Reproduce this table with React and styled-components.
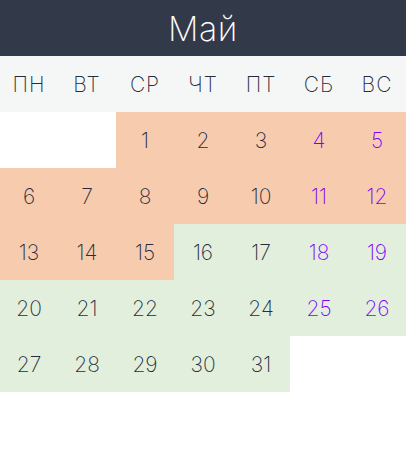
import React from "react";
import styled, { createGlobalStyle } from "styled-components";

const Global = createGlobalStyle`
  html, body { margin: 0; padding: 0; background: #ffffff; }
  body { font-family: Inter, "Noto Sans", sans-serif; }
`;

const Calendar = styled.div`
  width: 406px;
  font-family: Inter, "Noto Sans", sans-serif;
  font-weight: 200;
  color: #262c3a;
`;

const Title = styled.div`
  height: 56px;
  background: #323a4a;
  color: #ffffff;
  display: flex;
  align-items: center;
  justify-content: center;
  font-size: 34px;
  font-weight: 200;
  letter-spacing: 0.5px;
`;

const Grid = styled.div`
  display: grid;
  grid-template-columns: repeat(7, 1fr);
  grid-auto-rows: 56px;
`;

const WeekRow = styled(Grid)`
  background: #f5f7f7;
`;

const WeekDay = styled.div`
  display: flex;
  align-items: center;
  justify-content: center;
  font-size: 21px;
  font-weight: 250;
  letter-spacing: 1px;
`;

const Day = styled.div`
  display: flex;
  align-items: center;
  justify-content: center;
  font-size: 21px;
  font-weight: 250;
  background: ${(p) => (p.$tone === "peach" ? "#f7cbae" : p.$tone === "green" ? "#e2efdc" : "transparent")};
  color: ${(p) => (p.$weekend ? "#8000ff" : "#262c3a")};
`;

const weekdays = ["ПН", "ВТ", "СР", "ЧТ", "ПТ", "СБ", "ВС"];

export default function App() {
  const cells = [];
  for (let i = 0; i < 2; i++) cells.push({ key: "e" + i, empty: true });
  for (let d = 1; d <= 31; d++) cells.push({ key: "d" + d, d });

  return (
    <>
      <Global />
      <Calendar>
        <Title>Май</Title>
        <WeekRow>
          {weekdays.map((w) => (
            <WeekDay key={w}>{w}</WeekDay>
          ))}
        </WeekRow>
        <Grid>
          {cells.map((c, idx) => {
            if (c.empty) return <Day key={c.key} />;
            const col = idx % 7;
            return (
              <Day key={c.key} $tone={c.d <= 15 ? "peach" : "green"} $weekend={col >= 5}>
                {c.d}
              </Day>
            );
          })}
        </Grid>
      </Calendar>
    </>
  );
}
